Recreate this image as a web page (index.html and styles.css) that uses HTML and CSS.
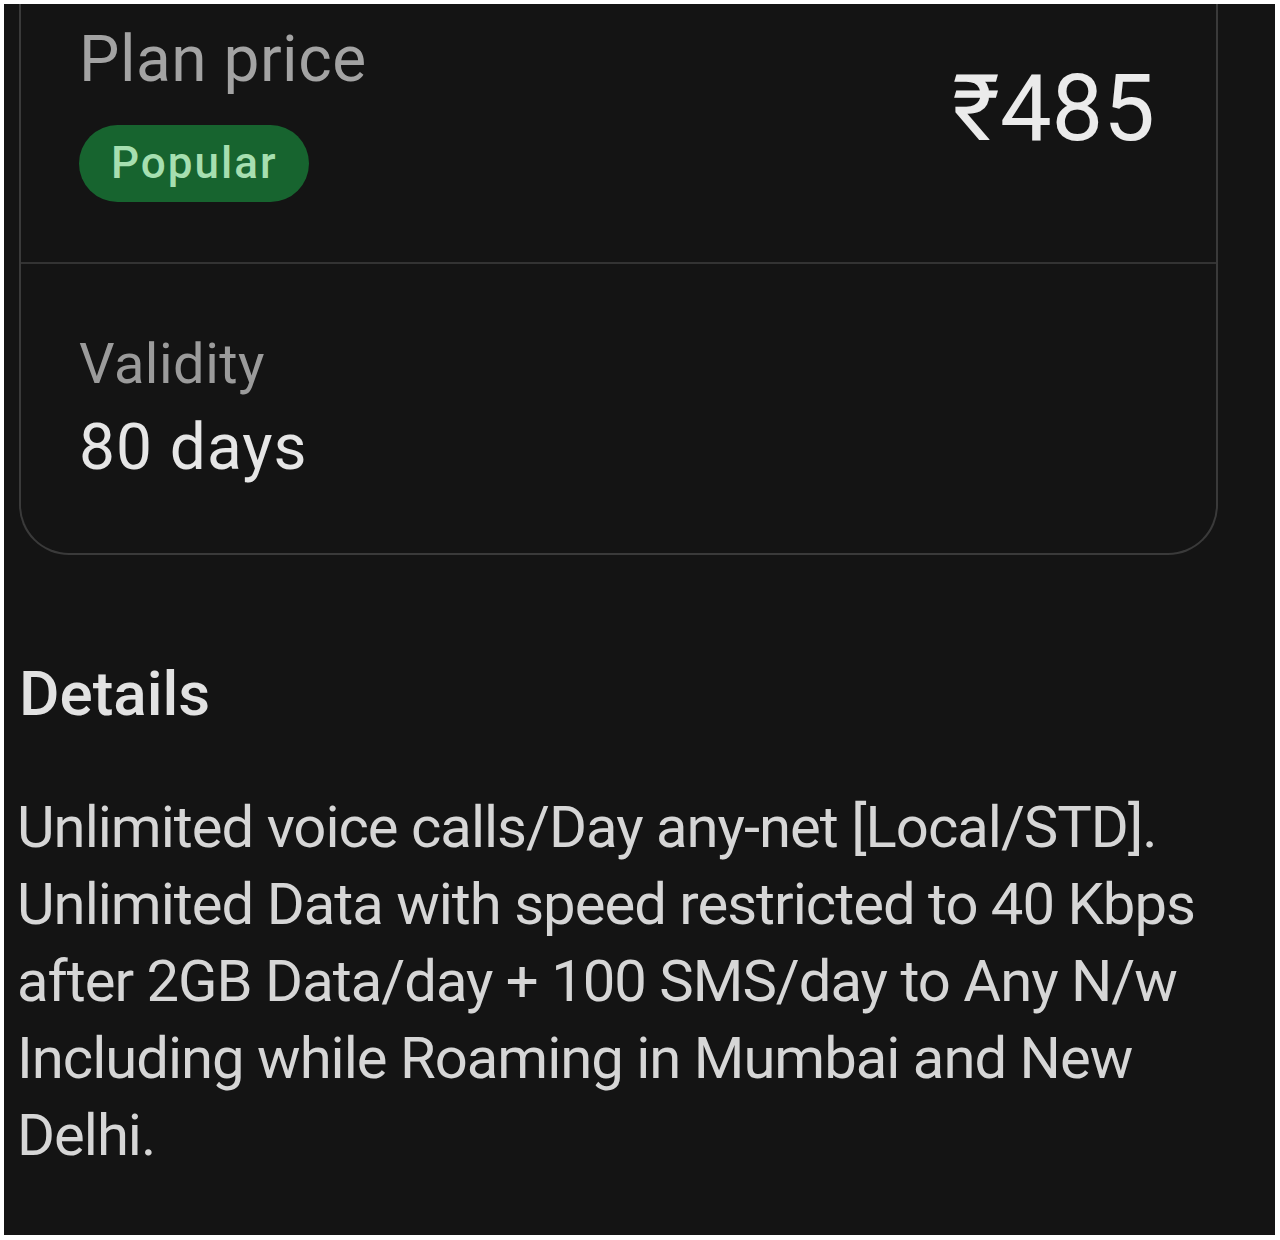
FILE: index.html
```html
<!DOCTYPE html>
<html lang="en">
<head>
<meta charset="utf-8">
<title>Plan details</title>
<link rel="stylesheet" href="styles.css">
</head>
<body>
<div class="screen">
  <section class="card">
    <div class="card-top">
      <div class="price-info">
        <div class="label">Plan price</div>
        <span class="badge">Popular</span>
      </div>
      <div class="price">₹485</div>
    </div>
    <div class="card-bottom">
      <div class="label small">Validity</div>
      <div class="value">80 days</div>
    </div>
  </section>
  <h2 class="details-title">Details</h2>
  <p class="details-text">Unlimited voice calls/Day any-net [Local/STD].<br>Unlimited Data with speed restricted to 40 Kbps<br>after 2GB Data/day + 100 SMS/day to Any N/w<br>Including while Roaming in Mumbai and New<br>Delhi.</p>
</div>
</body>
</html>
```
FILE: styles.css
```css
html, body {
  margin: 0;
  padding: 0;
  background: #ffffff;
}
body {
  font-family: Roboto, "Noto Sans", "Liberation Sans", sans-serif;
}
.screen {
  margin: 4px 5px 5px 4px;
  height: 1231px;
  background: #141414;
  padding: 0 57px 0 15px;
  box-sizing: border-box;
  overflow: hidden;
}
.card {
  border: 2px solid #3a3a3a;
  border-top: none;
  border-radius: 0 0 50px 50px;
}
.card-top {
  display: flex;
  justify-content: space-between;
  align-items: flex-start;
  padding: 20px 61px 60px 58px;
  border-bottom: 2px solid #333333;
}
.label {
  font-size: 64px;
  line-height: 72px;
  color: #a3a3a3;
  letter-spacing: 0.5px;
}
.label.small {
  font-size: 56px;
  line-height: 64px;
  color: #9b9b9b;
}
.badge {
  display: inline-block;
  margin-top: 29px;
  padding: 0 32px 0 32px;
  height: 77px;
  line-height: 77px;
  font-size: 44px;
  font-weight: 500;
  letter-spacing: 2px;
  border-radius: 39px;
  background: #17642f;
  color: #a6dfb0;
}
.price {
  margin-top: 35px;
  font-size: 92px;
  line-height: 100px;
  color: #ebebeb;
}
.card-bottom {
  padding: 68px 58px 69px;
}
.value {
  margin-top: 16px;
  font-size: 64px;
  line-height: 72px;
  letter-spacing: 1px;
  color: #e6e6e6;
}
.details-title {
  margin: 103px 0 0 0;
  font-size: 62px;
  line-height: 72px;
  font-weight: 500;
  color: #e2e2e2;
}
.details-text {
  margin: 59px 0 0 -2px;
  font-size: 58px;
  line-height: 77px;
  letter-spacing: -1px;
  white-space: nowrap;
  color: #d6d6d6;
}
```
